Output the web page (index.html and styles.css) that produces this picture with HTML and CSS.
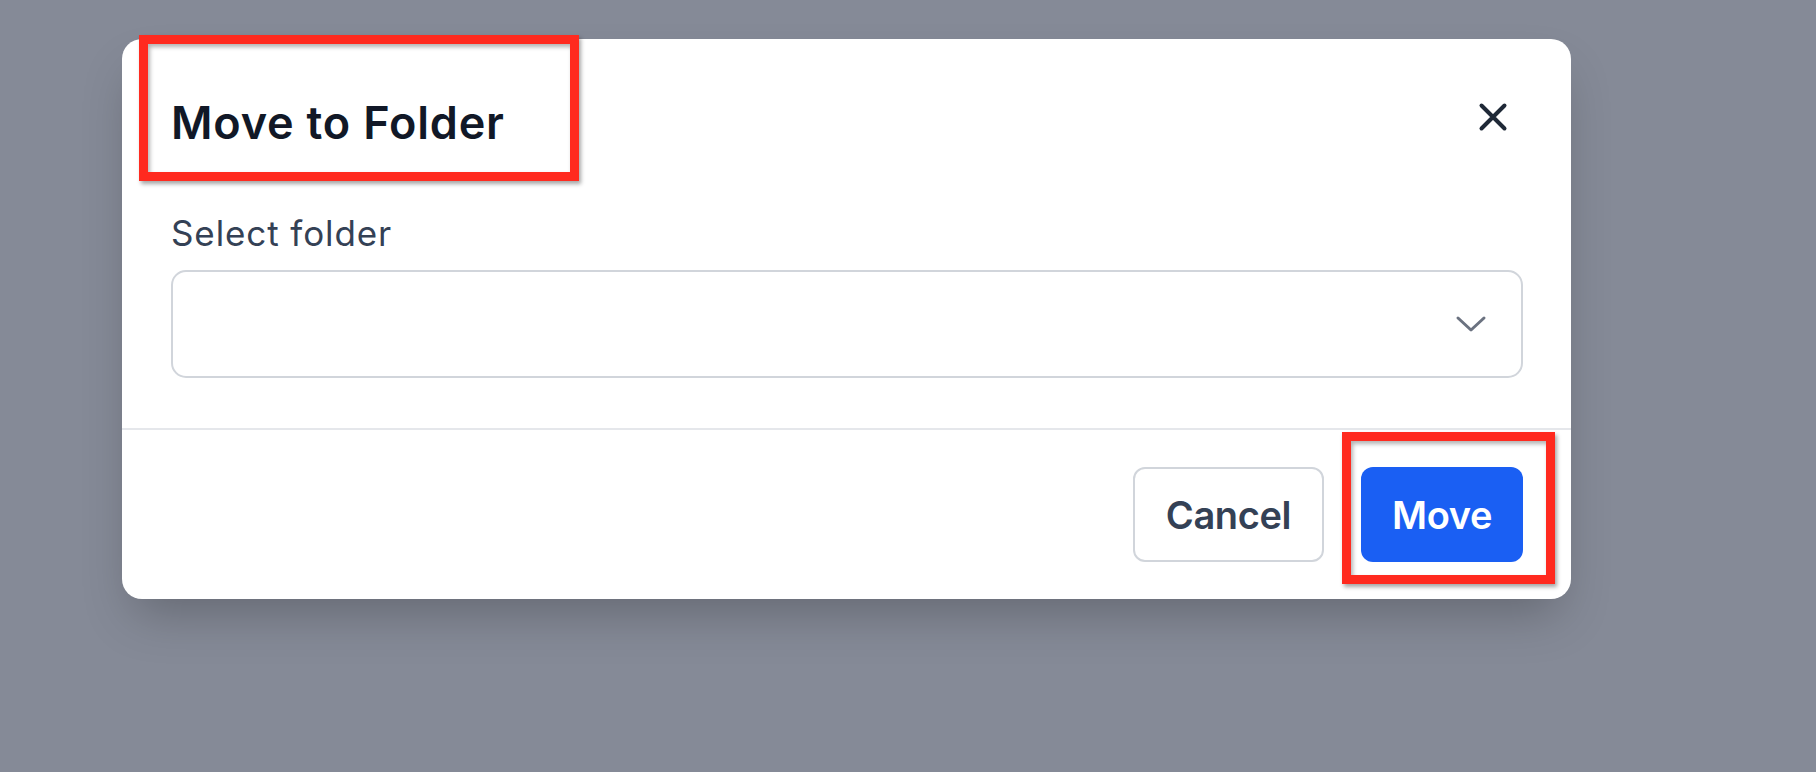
FILE: index.html
```html
<!DOCTYPE html>
<html lang="en">
<head>
    <meta charset="UTF-8">
    <meta name="viewport" content="width=device-width, initial-scale=1.0">
    <title>Move to Folder</title>
    <link rel="stylesheet" href="styles.css">
</head>
<body>
    <div class="backdrop">
        <div class="modal">
            <div class="modal-header">
                <h2>Move to Folder</h2>
                <button class="close" aria-label="Close">
                    <svg width="30" height="30" viewBox="0 0 30 30">
                        <path d="M3.5 3.5L26.5 26.5M26.5 3.5L3.5 26.5" fill="none" stroke="currentColor" stroke-width="4" stroke-linecap="round"/>
                    </svg>
                </button>
            </div>
            <div class="modal-body">
                <label class="label">Select folder</label>
                <div class="select">
                    <svg width="32" height="18" viewBox="0 0 32 18">
                        <path d="M3 3L16 15L29 3" fill="none" stroke="currentColor" stroke-width="3" stroke-linecap="round" stroke-linejoin="round"/>
                    </svg>
                </div>
            </div>
            <div class="modal-footer">
                <button class="btn btn-cancel">Cancel</button>
                <button class="btn btn-move">Move</button>
            </div>
        </div>
    </div>

    <!-- annotation boxes -->
    <div class="annot annot-title"></div>
    <div class="annot annot-move"></div>
</body>
</html>
```

FILE: styles.css
```css
html, body {
    margin: 0;
    height: 100%;
}
body {
    font-family: Inter, "Noto Sans", sans-serif;
    background-color: #858a97;
    overflow: hidden;
}
.backdrop {
    padding: 39px 0 0 122px;
}
.modal {
    width: 1449px;
    background-color: #fff;
    border-radius: 20px;
    box-shadow: 0 25px 50px -12px rgba(0,0,0,0.25);
}
.modal-header {
    display: flex;
    justify-content: space-between;
    align-items: flex-start;
    padding: 57px 48px 0 49px;
}
.modal-header h2 {
    margin: 0;
    font-size: 45px;
    font-weight: 600;
    line-height: 54px;
    letter-spacing: 0.8px;
    color: #111827;
}
.close {
    background: none;
    border: none;
    padding: 8px;
    margin: -2px 7px 0 0;
    color: #1f2937;
    display: flex;
    cursor: pointer;
}
.modal-body {
    padding: 62px 48px 50px 49px;
}
.label {
    display: block;
    font-size: 35px;
    line-height: 42px;
    letter-spacing: 0.9px;
    color: #344155;
    margin-bottom: 16px;
}
.select {
    height: 104px;
    border: 2px solid #d1d5db;
    border-radius: 15px;
    display: flex;
    justify-content: flex-end;
    align-items: center;
    padding-right: 34px;
    color: #6b7280;
}
.modal-footer {
    display: flex;
    justify-content: flex-end;
    gap: 37px;
    border-top: 2px solid #e5e7eb;
    padding: 37px 48px 37px;
}
.btn {
    height: 95px;
    padding: 0 31px;
    font-family: inherit;
    font-size: 38px;
    font-weight: 600;
    letter-spacing: -0.4px;
    border-radius: 12px;
    cursor: pointer;
}
.btn-cancel {
    background-color: #fff;
    border: 2px solid #d1d5db;
    color: #344155;
}
.btn-move {
    background-color: #1a5ff3;
    border: none;
    color: #fff;
}
.annot {
    position: absolute;
    border: 9px solid #ff2a1f;
    box-shadow: 2px 3px 4px rgba(0,0,0,0.35), inset 2px 3px 4px rgba(0,0,0,0.3);
    box-sizing: border-box;
}
.annot-title {
    left: 139px;
    top: 35px;
    width: 440px;
    height: 146px;
}
.annot-move {
    left: 1342px;
    top: 432px;
    width: 213px;
    height: 152px;
}
```
